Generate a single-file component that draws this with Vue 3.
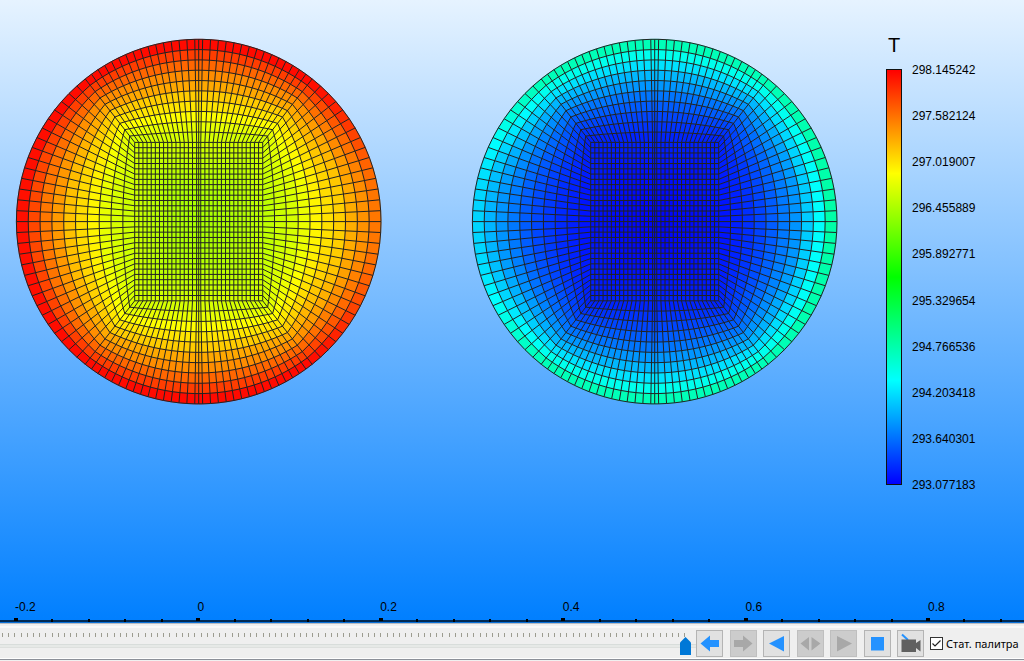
<script setup>
import { ref } from 'vue'

const RADIUS = 182.3
const HALF_W = 64
const HALF_H = 79.2
const COLS = 31
const ROWS = 30
const LAYERS = 10
const CORNER = (51.5 * Math.PI) / 180

// Perimeter nodes: matching points on the core rectangle and on the outer circle
function perimeter() {
  const nodes = []
  const add = (x, y, a) => nodes.push({ x, y, cx: RADIUS * Math.cos(a), cy: RADIUS * Math.sin(a) })
  const halfTop = Math.PI / 2 - CORNER
  const topParams = []
  for (let i = 0; i < COLS; i++) {
    topParams.push(-1 + (2 * i) / COLS)
    if (i === (COLS - 1) / 2) topParams.push(0)
  }
  for (const t of topParams) add(t * HALF_W, -HALF_H, -Math.PI / 2 + t * halfTop)
  for (let i = 0; i < ROWS; i++) {
    const t = -1 + (2 * i) / ROWS
    add(HALF_W, t * HALF_H, t * CORNER)
  }
  for (const t of topParams) add(-t * HALF_W, HALF_H, Math.PI / 2 + t * halfTop)
  for (let i = 0; i < ROWS; i++) {
    const t = -1 + (2 * i) / ROWS
    add(-HALF_W, -t * HALF_H, Math.PI + t * CORNER)
  }
  return nodes
}

function colour(v) {
  const c = Math.max(0, Math.min(1, v)) * 4
  const k = Math.round((c % 1) * 255)
  if (c < 1) return `rgb(0,${k},255)`
  if (c < 2) return `rgb(0,255,${255 - k})`
  if (c < 3) return `rgb(${k},255,0)`
  if (c < 4) return `rgb(255,${255 - k},0)`
  return 'rgb(255,0,0)'
}

const smooth = (t) => {
  const c = Math.max(0, Math.min(1, t))
  return c * c * (3 - 2 * c)
}

// Profiles run from the core outwards
const hot = {
  core: 0.665,
  left: [0.7, 0.71, 0.727, 0.76, 0.785, 0.81, 0.85, 0.883, 0.93, 0.985],
  mid: [0.71, 0.727, 0.75, 0.775, 0.8, 0.835, 0.862, 0.9, 0.94, 0.99],
  right: [0.687, 0.7, 0.71, 0.73, 0.76, 0.78, 0.797, 0.83, 0.857, 0.883],
}
const cold = {
  core: 0.005,
  left: [0.02, 0.03, 0.04, 0.055, 0.07, 0.09, 0.118, 0.145, 0.177, 0.208],
  mid: [0.035, 0.05, 0.068, 0.09, 0.115, 0.147, 0.18, 0.222, 0.268, 0.32],
  right: [0.02, 0.03, 0.045, 0.065, 0.09, 0.118, 0.145, 0.2, 0.252, 0.335],
}

function sample(field, layer, angle) {
  const deg = (Math.abs(angle) * 180) / Math.PI
  const r = 1 - smooth((deg - 5) / 50)
  const l = 1 - smooth((180 - deg - 5) / 50)
  const m = 1 - r - l
  return r * field.right[layer] + l * field.left[layer] + m * field.mid[layer]
}

const f = (n) => n.toFixed(2)

function buildDisc(field, ox, oy) {
  const nodes = perimeter()
  const at = (n, k) => {
    const t = k / LAYERS
    return [ox + n.x + (n.cx - n.x) * t, oy + n.y + (n.cy - n.y) * t]
  }
  const cells = []
  for (let k = 0; k < LAYERS; k++) {
    nodes.forEach((n, i) => {
      const m = nodes[(i + 1) % nodes.length]
      const q = [at(n, k), at(m, k), at(m, k + 1), at(n, k + 1)]
      const a = Math.atan2(n.cy + m.cy, n.cx + m.cx)
      cells.push({ d: 'M' + q.map((p) => f(p[0]) + ' ' + f(p[1])).join('L') + 'Z', c: colour(sample(field, k, a)) })
    })
  }
  for (let i = 0; i < COLS; i++) {
    for (let j = 0; j < ROWS; j++) {
      const u = -1 + (2 * i + 1) / COLS
      const v = -1 + (2 * j + 1) / ROWS
      const e = Math.max(u * u, v * v)
      const edge = sample(field, 0, Math.atan2(v * HALF_H, u * HALF_W))
      const x = ox - HALF_W + (2 * HALF_W * i) / COLS
      const y = oy - HALF_H + (2 * HALF_H * j) / ROWS
      cells.push({
        d: `M${f(x)} ${f(y)}h${f((2 * HALF_W) / COLS)}v${f((2 * HALF_H) / ROWS)}h${f((-2 * HALF_W) / COLS)}Z`,
        c: colour(field.core + (edge - field.core) * e),
      })
    }
  }
  let lines = ''
  for (let k = 0; k <= LAYERS; k++) {
    lines += 'M' + nodes.map((n) => at(n, k).map(f).join(' ')).join('L') + 'Z'
  }
  for (const n of nodes) lines += 'M' + at(n, 0).map(f).join(' ') + 'L' + at(n, LAYERS).map(f).join(' ')
  for (let i = 1; i < COLS; i++) lines += `M${f(ox - HALF_W + (2 * HALF_W * i) / COLS)} ${f(oy - HALF_H)}v${2 * HALF_H}`
  for (let j = 1; j < ROWS; j++) lines += `M${f(ox - HALF_W)} ${f(oy - HALF_H + (2 * HALF_H * j) / ROWS)}h${2 * HALF_W}`
  lines += `M${ox} ${f(oy - HALF_H)}v${2 * HALF_H}`
  return { cells, lines }
}

const discs = [buildDisc(hot, 198.7, 221.6), buildDisc(cold, 654.7, 221.6)]

const legend = ['298.145242', '297.582124', '297.019007', '296.455889', '295.892771', '295.329654', '294.766536', '294.203418', '293.640301', '293.077183']

const axis = Array.from({ length: 28 }, (_, i) => ({ x: 16 + i * 36.48, major: i % 5 === 0 }))
const axisLabels = ['-0.2', '0', '0.2', '0.4', '0.6', '0.8'].map((text, i) => ({ text, x: 15 + i * 182.6 }))

const frame = ref(110)
const staticPalette = ref(true)

const controls = [
  { name: 'Предыдущий кадр', d: 'M4.5 13.5L14 5.5V10H23V17H14V21.5Z' },
  { name: 'Следующий кадр', d: 'M22.5 13.5L13 5.5V10H4V17H13V21.5Z', off: true },
  { name: 'Воспроизвести назад', d: 'M6 13.5L21 6V21.5Z' },
  { name: 'В обе стороны', d: 'M3.5 13.5L12 7V20.5ZM23.5 13.5L14.5 7V20.5Z', off: true },
  { name: 'Воспроизвести', d: 'M22 13.5L7 6V21.5Z', off: true },
  { name: 'Стоп', d: 'M7 7H20V20.5H7Z' },
  { name: 'Записать видео', camera: true },
]
</script>

<template>
  <div class="viewer">
    <main class="plot">
      <div class="scene">
        <svg class="mesh" viewBox="0 0 886 420" role="img" aria-label="T">
          <g v-for="(disc, i) in discs" :key="i">
            <g stroke-width="0.6">
              <path v-for="(cell, j) in disc.cells" :key="j" :d="cell.d" :fill="cell.c" :stroke="cell.c" />
            </g>
            <path class="wire" :d="disc.lines" />
          </g>
        </svg>
        <section class="legend">
          <h1>T</h1>
          <div class="scale">
            <div class="bar"></div>
            <ul>
              <li v-for="v in legend" :key="v">{{ v }}</li>
            </ul>
          </div>
        </section>
      </div>
      <svg class="axis" viewBox="0 0 1024 28">
        <text v-for="l in axisLabels" :key="l.text" :x="l.x" y="17">{{ l.text }}</text>
        <rect x="0" y="26" width="1024" height="2" class="base" />
        <rect v-for="t in axis" :key="t.x" :x="Math.round(t.x) - (t.major ? 2 : 1)" :y="t.major ? 24 : 25" :width="t.major ? 4 : 2" height="3" />
      </svg>
    </main>

    <footer class="toolbar">
      <div class="slider">
        <div class="ticks"><i v-for="n in 111" :key="n"></i></div>
        <input v-model="frame" type="range" min="0" max="110" aria-label="Кадр" />
      </div>
      <div class="buttons">
        <button v-for="c in controls" :key="c.name" type="button" :aria-label="c.name" :disabled="c.off">
          <svg viewBox="0 0 27 27" width="27" height="27">
            <template v-if="c.camera">
              <path d="M5 4.5L11 10" stroke="#2492ff" stroke-width="2" />
              <path d="M4.5 9.5H19V13L23.5 10V21.5L19 18V22H4.5Z" fill="#606060" />
            </template>
            <path v-else :d="c.d" />
          </svg>
        </button>
      </div>
      <label class="check">
        <input v-model="staticPalette" type="checkbox" />
        <svg viewBox="0 0 13 13" width="13" height="13" aria-hidden="true">
          <rect x="0.5" y="0.5" width="12" height="12" fill="#fff" stroke="#333" />
          <path v-if="staticPalette" d="M2.5 6.5L5 9L10.5 3.5" fill="none" stroke="#222" stroke-width="1.2" />
        </svg>
        <span>Стат. палитра</span>
      </label>
    </footer>
  </div>
</template>

<style>
body {
  margin: 0;
}
</style>

<style scoped>
.viewer {
  display: flex;
  flex-direction: column;
  min-height: 100vh;
  font-family: "Liberation Sans", Arial, sans-serif;
  font-size: 12px;
  color: #000;
}
.plot {
  flex: 1;
  display: flex;
  flex-direction: column;
  justify-content: space-between;
  background: linear-gradient(#e6f3ff, #007fff);
  border-bottom: 1px solid #0a70d8;
}
.scene {
  display: flex;
  align-items: flex-start;
}
.mesh {
  flex: 1;
  min-width: 0;
}
.wire {
  fill: none;
  stroke: #222;
  stroke-width: 1;
}
.legend {
  width: 138px;
  padding-top: 34px;
}
h1 {
  width: 16px;
  margin: 0 0 6px;
  font-size: 20px;
  font-weight: 400;
  line-height: 22px;
  text-align: center;
}
.scale {
  display: flex;
  gap: 10px;
  height: 431px;
}
.bar {
  box-sizing: border-box;
  width: 16px;
  margin: 7px 0 8px;
  border: 1px solid #111;
  background: linear-gradient(#f00, #ff0, #0f0, #0ff, #00f);
}
ul {
  display: flex;
  flex-direction: column;
  justify-content: space-between;
  margin: 0;
  padding: 0;
  list-style: none;
  line-height: 16px;
}
.axis {
  display: block;
  width: 100%;
}
.axis .base {
  fill: #002a55;
}
.toolbar {
  box-sizing: border-box;
  display: flex;
  align-items: flex-start;
  height: 38px;
  padding: 7px 0 0;
  background: linear-gradient(#b8bcc2 0 1px, #f0f0f0 1px 3px, #f9f9f9 3px 5px, #efefef 5px 35px, #fff 35px 36px, #8c9099 36px 37px, #f0f0f0 37px);
}
.slider {
  flex: 1;
  min-width: 0;
}
.ticks {
  display: flex;
  justify-content: space-between;
  padding: 3px 10px 0 2px;
}
.ticks i {
  width: 1px;
  height: 4px;
  background: #9c9c90;
}
.slider input {
  display: block;
  appearance: none;
  box-sizing: border-box;
  width: 100%;
  height: 18px;
  margin: 0;
  padding-right: 5px;
  background: linear-gradient(transparent 7px, #d8dddb 7px 8px, #e6e9e7 8px 10px, #dde0de 10px 11px, transparent 11px);
}
.slider input::-webkit-slider-thumb {
  appearance: none;
  width: 11px;
  height: 18px;
  background: #0078d7;
  clip-path: polygon(50% 0, 100% 30%, 100% 100%, 0 100%, 0 30%);
}
.buttons {
  display: flex;
  justify-content: space-between;
  width: 228px;
}
button {
  width: 27px;
  height: 27px;
  padding: 0;
  border: 0;
  background: #e1e1e1;
  box-shadow: inset 0 0 0 1px #b4b4b4;
  fill: #2492ff;
}
button:disabled {
  background: #ccc;
  box-shadow: inset 0 0 0 1px #bfbfbf;
  fill: #a8a8a8;
}
button svg {
  display: block;
}
.check {
  display: flex;
  align-items: center;
  gap: 3px;
  width: 94px;
  height: 27px;
  margin-left: 6px;
  font-family: "Noto Sans", sans-serif;
  font-size: 11px;
  white-space: nowrap;
}
.check input {
  position: absolute;
  opacity: 0;
}
</style>
